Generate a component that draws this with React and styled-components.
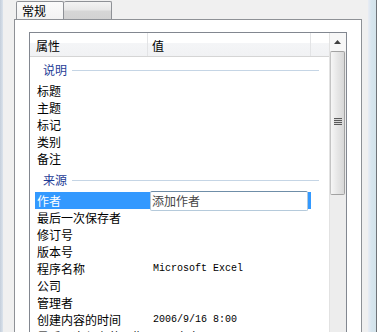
import React from 'react';
import styled, { createGlobalStyle } from 'styled-components';

const GlobalStyle = createGlobalStyle`
  body {
    margin: 0;
    background: #f0f0f0;
    font-family: "Noto Sans CJK SC", sans-serif;
    font-size: 12px;
  }
`;

const Window = styled.div`
  display: flex;
  width: 377px;
  height: 332px;
  overflow: hidden;
  background: #f0f0f0;
`;

const FrameLeft = styled.div`
  width: 3px;
  background: linear-gradient(to right, #c4cedb, #dbe3ec);
`;

const FrameRight = styled.div`
  width: 8px;
  background: linear-gradient(to right, #e9ecf4, #d6e5ee 45%, #d3e3ea);
  border-right: 1px solid #6e7378;
`;

const Body = styled.div`
  flex: 1;
  align-self: flex-start;
  height: 380px;
  padding: 0 6px 0 11px;
  display: flex;
  flex-direction: column;
  min-width: 0;
`;

const TabStrip = styled.div`
  display: flex;
  height: 19px;
  padding: 1px 0 0 2px;
  box-sizing: border-box;
`;

const Tab = styled.div`
  width: 48px;
  height: 18px;
  box-sizing: border-box;
  border: 1px solid #8e9196;
  border-bottom: none;
  border-left-width: ${p => (p.first ? '1px' : '0')};
  border-radius: 2px 2px 0 0;
  padding-left: 5px;
  line-height: 17px;
  color: #000;
  background: ${p =>
    p.active
      ? 'linear-gradient(#fbfbfb, #f2f2f2)'
      : 'linear-gradient(#f3f3f3, #e8e8e8 45%, #d6d6d6 55%, #d2d2d2)'};
`;

const Panel = styled.div`
  flex: 1;
  display: flex;
  flex-direction: column;
  border: 1px solid #8e9196;
  background: #fff;
  padding: 12px 14px 0;
`;

const List = styled.div`
  flex: 1;
  display: grid;
  grid-template-columns: 299px 17px;
  border: 1px solid #828790;
  background: #fff;
`;

const Content = styled.div`
  display: flex;
  flex-direction: column;
`;

const Header = styled.div`
  display: grid;
  grid-template-columns: 118px 163px 18px;
  height: 24px;
  box-sizing: border-box;
  border-bottom: 1px solid #d5d5d5;
  background: linear-gradient(#ffffff 0, #ffffff 42%, #f4f5f7 43%, #f1f2f4 100%);
`;

const HeaderCell = styled.div`
  display: flex;
  align-items: center;
  padding-left: ${p => p.pad}px;
  padding-top: 2px;
  border-right: ${p => (p.last ? 'none' : '1px solid #e3e4e6')};
  color: #000;
`;

const Group = styled.div`
  display: flex;
  align-items: center;
  height: 25px;
  padding-left: 13px;
`;

const GroupTitle = styled.span`
  color: #1e3c96;
  line-height: 17px;
`;

const GroupLine = styled.div`
  flex: 1;
  height: 1px;
  margin: 1px 10px 0 5px;
  background: #c5d5e5;
`;

const Row = styled.div`
  display: flex;
  align-items: center;
  height: 17px;
  line-height: 17px;
  ${p =>
    p.selected
      ? `
    margin-left: 5px;
    width: 276px;
    background: #3399ff;
    color: #fff;
  `
      : `
    color: #000;
  `}
`;

const Label = styled.div`
  flex: none;
  box-sizing: border-box;
  width: ${p => (p.selected ? 115 : 118)}px;
  padding-left: ${p => (p.selected ? 2 : 7)}px;
  white-space: nowrap;
`;

const Value = styled.div`
  padding-left: 5px;
  font-family: "Liberation Mono", monospace;
  font-size: 10px;
  white-space: nowrap;
`;

const EditBox = styled.div`
  align-self: flex-start;
  width: 158px;
  height: 20px;
  margin-top: -1px;
  box-sizing: border-box;
  border: 1px solid #b5cadb;
  border-top-color: #6f8ea8;
  border-radius: 2px;
  background: #fff;
  color: #444;
  padding-left: 1px;
  line-height: 18px;
`;

const ScrollBar = styled.div`
  display: flex;
  flex-direction: column;
  background: #ededed;
  border-left: 1px solid #e2e2e2;
`;

const ArrowButton = styled.div`
  height: 18px;
  display: flex;
  align-items: center;
  justify-content: center;
  padding-right: 1px;
  background: #f7f7f7;
`;

const Thumb = styled.div`
  height: 144px;
  margin-right: 1px;
  box-sizing: border-box;
  border: 1px solid #a2a2a2;
  border-left-color: #c4c4c4;
  border-radius: 2px;
  background: linear-gradient(to right, #f6f6f6, #e6e6e6 50%, #d8d8d8);
  display: flex;
  align-items: center;
  justify-content: center;
`;

const Grip = styled.div`
  width: 8px;
  height: 7px;
  margin-top: -3px;
  background: repeating-linear-gradient(#5a5a5a 0 1px, #d8d8d8 1px 2px);
`;

const sections = [
  {
    title: '说明',
    items: [{ label: '标题' }, { label: '主题' }, { label: '标记' }, { label: '类别' }, { label: '备注' }]
  },
  {
    title: '来源',
    items: [
      { label: '作者', edit: '添加作者' },
      { label: '最后一次保存者' },
      { label: '修订号' },
      { label: '版本号' },
      { label: '程序名称', value: 'Microsoft Excel' },
      { label: '公司' },
      { label: '管理者' },
      { label: '创建内容的时间', value: '2006/9/16 8:00' },
      { label: '最后一次保存的日期', value: '2012/5/20 14:31' }
    ]
  }
];

const PropertyRow = ({ item }) => {
  const selected = !!item.edit;
  return (
    <Row selected={selected}>
      <Label selected={selected}>{item.label}</Label>
      {selected && <EditBox>{item.edit}</EditBox>}
      {item.value && <Value>{item.value}</Value>}
    </Row>
  );
};

const App = () => {
  return (
    <>
      <GlobalStyle />
      <Window>
        <FrameLeft />
        <Body>
          <TabStrip>
            <Tab first active>常规</Tab>
            <Tab />
          </TabStrip>
          <Panel>
            <List>
              <Content>
                <Header>
                  <HeaderCell pad={6}>属性</HeaderCell>
                  <HeaderCell pad={4}>值</HeaderCell>
                  <HeaderCell last />
                </Header>
                {sections.map(section => (
                  <React.Fragment key={section.title}>
                    <Group>
                      <GroupTitle>{section.title}</GroupTitle>
                      <GroupLine />
                    </Group>
                    {section.items.map(item => (
                      <PropertyRow key={item.label} item={item} />
                    ))}
                  </React.Fragment>
                ))}
              </Content>
              <ScrollBar>
                <ArrowButton>
                  <svg width="7" height="4" viewBox="0 0 7 4">
                    <path d="M3.5 0 L7 4 L0 4 Z" fill="#404040" />
                  </svg>
                </ArrowButton>
                <Thumb>
                  <Grip />
                </Thumb>
              </ScrollBar>
            </List>
          </Panel>
        </Body>
        <FrameRight />
      </Window>
    </>
  );
};

export default App;
